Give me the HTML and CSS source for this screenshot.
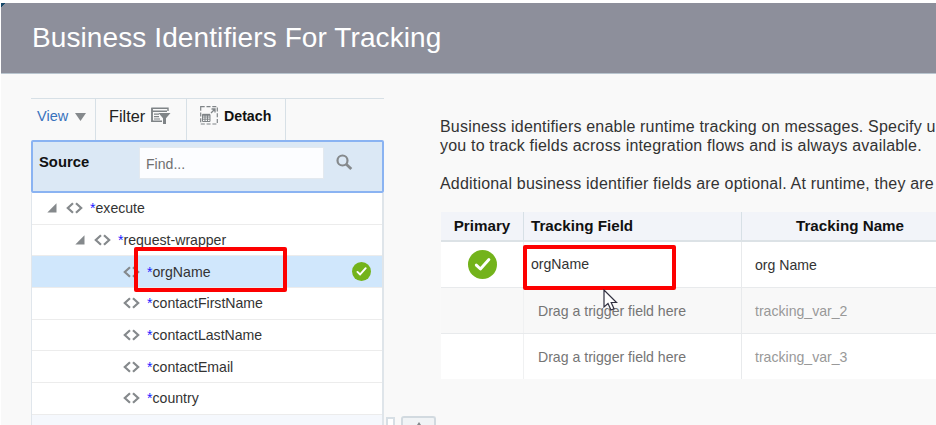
FILE: index.html
```html
<!DOCTYPE html>
<html lang="en">
<head>
<meta charset="utf-8">
<title>Business Identifiers For Tracking</title>
<link rel="stylesheet" href="styles.css">
</head>
<body>
<svg class="defs" width="0" height="0">
  <symbol id="code" viewBox="0 0 17 12"><path d="M7 1.2 1.8 6 7 10.8M10 1.2 15.2 6 10 10.8" fill="none" stroke="#85898c" stroke-width="2.2"/></symbol>
  <symbol id="open" viewBox="0 0 10 10"><path d="M9.5.3V9.5H.3Z" fill="#85898c"/></symbol>
  <symbol id="ok" viewBox="0 0 28 28"><circle cx="14" cy="14" r="14" fill="#73b31b"/><path d="m8 14.6 4 3.8 8.2-9.2" fill="none" stroke="#fff" stroke-width="2.8" stroke-linecap="round" stroke-linejoin="round"/></symbol>
</svg>
<div class="frame">
<header class="titlebar"><h1><span>Business Identifiers For Tracking</span></h1></header>
<main class="content">
  <section class="source">
    <div class="toolbar">
      <div class="tool view"><span>View</span><svg width="11" height="8" viewBox="0 0 11 8"><path d="M0 0h11L5.5 8z" fill="#85898c"/></svg></div>
      <div class="tool filter"><span>Filter</span>
        <svg width="20" height="18" viewBox="0 0 20 18" fill="none" stroke="#7f8487"><path d="M11 14.2H1V1.2H17V4M1 4.2H16" stroke-width="1.4"/><path d="M3 7.2H8M3 9.7H8M3 12H9" stroke-width="1.2"/><path d="M1 1v14" stroke-width="1.6"/><path d="M7.5 6H19.5L15 11.2V17H12V11.2Z" fill="#7f8487" stroke="none"/></svg></div>
      <div class="tool detach">
        <svg width="18" height="19" viewBox="0 0 18 19" fill="none" stroke="#7f8487"><path d="M.7.7H17.3V18H.7Z" stroke-dasharray="4 1.8" stroke-width="1.2"/><path d="M2.5 8.5H10V15.5H2.5ZM2.5 11H10M2.5 13.2H10M5 9V15.5M7.5 9V15.5"/><path d="M2.5 8.8H10" stroke-width="2"/><path d="m11 7 4-4M11.5 3H15V6.5" stroke-width="1.3"/></svg>
        <span>Detach</span></div>
    </div>
    <div class="search">
      <b>Source</b><div class="find"><span>Find...</span></div>
      <svg width="17" height="17" viewBox="0 0 17 17" fill="none" stroke="#85898c"><circle cx="6.5" cy="6.5" r="5" stroke-width="2.2"/><path d="m10 10 5.3 5" stroke-width="2.8"/></svg>
    </div>
    <ul class="tree">
      <li class="l1"><svg class="open"><use href="#open"/></svg><svg class="code"><use href="#code"/></svg><span><i>*</i>execute</span></li>
      <li class="l2"><svg class="open"><use href="#open"/></svg><svg class="code"><use href="#code"/></svg><span><i>*</i>request-wrapper</span></li>
      <li class="l3 selected"><svg class="code"><use href="#code"/></svg><span><i>*</i>orgName</span><svg class="ok"><use href="#ok"/></svg><div class="mark mark-source"></div></li>
      <li class="l3"><svg class="code"><use href="#code"/></svg><span><i>*</i>contactFirstName</span></li>
      <li class="l3"><svg class="code"><use href="#code"/></svg><span><i>*</i>contactLastName</span></li>
      <li class="l3"><svg class="code"><use href="#code"/></svg><span><i>*</i>contactEmail</span></li>
      <li class="l3"><svg class="code"><use href="#code"/></svg><span><i>*</i>country</span></li>
    </ul>
    <div class="rest"></div>
  </section>
  <div class="splitter"><div class="grip"></div><div class="collapse"><svg width="4" height="3" viewBox="0 0 4 3"><path d="M2 0 4 3H0Z" fill="#85898c"/></svg></div></div>
  <section class="detail">
    <p>Business identifiers enable runtime tracking on messages. Specify u<br>you to track fields across integration flows and is always available.</p>
    <p>Additional business identifier fields are optional. At runtime, they are</p>
    <div class="grid">
      <div class="row head"><div class="primary"><span>Primary</span></div><div class="field"><span>Tracking Field</span></div><div class="name"><span>Tracking Name</span></div></div>
      <div class="row first"><div class="primary"><svg><use href="#ok"/></svg></div><div class="field"><span>orgName</span><div class="mark mark-field"></div></div><div class="name"><span>org Name</span></div></div>
      <div class="row empty alt"><div class="primary"></div><div class="field"><span>Drag a trigger field here</span></div><div class="name"><span>tracking_var_2</span></div></div>
      <div class="row empty"><div class="primary"></div><div class="field"><span>Drag a trigger field here</span></div><div class="name"><span>tracking_var_3</span></div></div>
      <svg class="cursor" width="15" height="23" viewBox="0 0 15 23"><path d="M1 1V18L5 14.5 8 21 11 19.7 8.2 13.5H13.5Z" fill="#fff" stroke="#303040" stroke-width="1.2"/></svg>
    </div>
  </section>
</main>
</div>
</body>
</html>
```

FILE: styles.css
```css
* { box-sizing: border-box; }
body { margin: 0; height: 425px; overflow: hidden; background: #fff; font: 14.1px/18px "Liberation Sans", Arial, sans-serif; color: #333; }
svg { display: block; flex: none; }
span, b { white-space: nowrap; }
.defs { position: absolute; }
.frame { height: 425px; padding: 3px 0 0 1px; display: flex; flex-direction: column; overflow: hidden; }
.titlebar { height: 71px; flex: none; background: linear-gradient(135deg, #174869 3px, transparent 3px), #8d8f9b; border-bottom: 1px solid #b9c5cf; display: flex; align-items: center; padding-left: 31px; }
h1 { margin: 0; font-size: 28px; line-height: 34px; font-weight: 400; letter-spacing: 0.1px; color: #fff; }
.content { flex: 1; min-height: 0; background: #f9f9f9; display: flex; padding: 24px 0 0 30px; }

.source { width: 353px; flex: none; display: flex; flex-direction: column; border-top: 1px solid #d7e0e6; }
.toolbar { height: 41px; flex: none; display: flex; }
.tool { border-right: 1px solid #d7e0e6; display: flex; align-items: center; padding-bottom: 8px; }
.view { width: 65px; padding-left: 6px; gap: 7px; font-size: 14.5px; color: #3872bd; }
.view svg { margin-top: 3px; }
.filter { width: 91px; padding-left: 13px; gap: 6px; font-size: 16.3px; color: #222; }
.detach { width: 99px; padding-left: 13px; gap: 6px; font-weight: 700; font-size: 14.2px; color: #111; }
.search { height: 53px; flex: none; background: #dbe8f5; border: 2px solid #8ab3f2; border-radius: 2px; display: flex; align-items: flex-start; padding: 5px 0 0 6px; color: #111; }
.search b { width: 100px; padding-top: 6px; font-size: 14.8px; }
.find { width: 185px; height: 32px; background: #fcfdff; border: 1px solid #e3e9ef; padding: 7px 6px 0; color: #707070; }
.search svg { margin: 7px 0 0 12px; }
.tree { list-style: none; margin: 0; padding: 0; border-left: 1px solid #e0e6ec; border-right: 2px solid #dfe5ea; background: #fff; }
.tree li { height: 31.7px; border-bottom: 1px solid #ececec; display: flex; align-items: center; position: relative; }
.tree i { color: #2020ff; font-style: normal; }
.tree .code { width: 17px; height: 12px; margin-right: 7px; }
.tree .open { width: 10px; height: 10px; margin-right: 9px; }
.l1 { padding-left: 15px; }
.l2 { padding-left: 43px; }
.l3 { padding-left: 91px; }
.selected { background: #d0e7fc; }
.tree .ok { width: 19px; height: 19px; position: absolute; right: 11px; top: 6px; }
.mark { position: absolute; border: 4px solid #fd0000; border-radius: 2px; z-index: 2; }
.mark-source { left: 102px; top: -9px; width: 153px; height: 45px; }
.rest { flex: 1; background: #f5f8fd; border-left: 1px solid #e0e6ec; border-right: 2px solid #dfe5ea; }

.splitter { width: 57px; flex: none; display: flex; align-items: flex-end; gap: 6px; padding-left: 2px; }
.grip { width: 9px; height: 8px; border: 2px solid #d7dfe5; border-bottom: 0; background: #fff; }
.collapse { width: 35px; height: 9px; border: 2px solid #d2dae0; border-bottom: 0; border-radius: 3px 3px 0 0; background: #f1f4f6; display: flex; justify-content: center; align-items: flex-end; }

.detail { width: 495px; flex: none; padding-top: 19px; }
.detail p { margin: 0 0 19px -1px; font-size: 16px; line-height: 19px; letter-spacing: 0.19px; white-space: nowrap; }
.grid { position: relative; }
.row { display: flex; height: 46px; background: #fff; border-bottom: 1px solid #e8eaec; }
.row:nth-child(4) { border-bottom: 0; height: 45px; }
.row > div { display: flex; align-items: center; border-right: 1px solid #e8eaec; position: relative; }
.row .primary { width: 83px; justify-content: center; border-right-color: #f0f1f2; }
.row .field { width: 218px; }
.row .name { flex: 1; padding-left: 13px; border-right: 0; }
.row.head { height: 30px; background: #f2f4f9; border-bottom: 2px solid #dce2e6; color: #111; font-weight: 700; font-size: 15.2px; }
.row.head > div { border-right-color: #d7e0e6; }
.head .field { padding-left: 7px; }
.row.head .name { padding-left: 54px; }
.first .primary svg { width: 29px; height: 29px; }
.first .field { padding: 0 0 2px 7px; }
.empty { color: #757575; }
.empty .field { padding-left: 14px; }
.empty .name { color: #999; }
.alt { background: #f8f8f8; }
.mark-field { left: -1px; top: 3px; width: 153px; height: 45px; }
.cursor { position: absolute; left: 162px; top: 77px; z-index: 3; }
```
